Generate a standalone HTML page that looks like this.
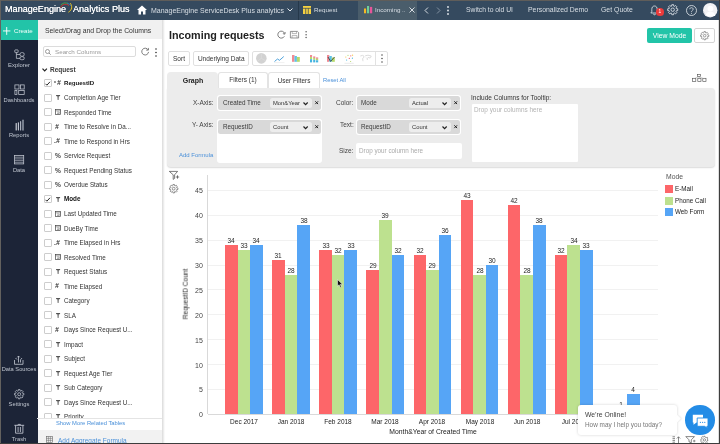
<!DOCTYPE html>
<html><head><meta charset="utf-8"><style>
html,body{margin:0;padding:0;}
body{width:720px;height:444px;overflow:hidden;position:relative;background:#fff;font-family:"Liberation Sans",sans-serif;}
.r{position:absolute;}
.t{position:absolute;white-space:nowrap;line-height:1;font-family:"Liberation Sans",sans-serif;will-change:transform;}
svg.r{overflow:visible;}
#wrap{position:absolute;left:0;top:0;width:720px;height:444px;overflow:hidden;filter:blur(0.25px);}
</style></head><body><div id="wrap">
<div class="r" style="left:0.00px;top:0.00px;width:720.00px;height:20.00px;background:#354a5f"></div>
<div class="t" style="left:4.90px;top:5.03px;font-size:9.1px;color:#fff;font-weight:normal;text-shadow:0 0 0.4px #fff">ManageEngine</div>
<svg class="r" style="left:0;top:0" width="80" height="20" viewBox="0 0 80 20"><path d="M60.53 7.75 A5.4 5.4 0 0 1 69.07 5.46" stroke="#d9342b" stroke-width="0.9" fill="none"/><path d="M60.79 4.79 A6.8 6.8 0 0 1 67.93 3.21" stroke="#3cab4b" stroke-width="0.9" fill="none"/><path d="M67.31 3.22 A6.6 6.6 0 0 1 71.32 6.30" stroke="#2f80c8" stroke-width="0.9" fill="none"/><path d="M70.2 3.2 C72.6 6 72.2 10 68.4 12.2" stroke="#f0c419" stroke-width="1" fill="none"/></svg>
<div class="t" style="left:72.90px;top:5.03px;font-size:9.1px;color:#fff;font-weight:normal;text-shadow:0 0 0.4px #fff">Analytics Plus</div>
<svg class="r" style="left:136.5px;top:5px" width="10" height="10" viewBox="0 0 10 10"><path d="M5 0.5 L10 5 H8.5 V9.5 H6 V6.5 H4 V9.5 H1.5 V5 H0 Z" fill="#fff"/></svg>
<div class="t" style="left:150.80px;top:6.94px;font-size:7px;color:#d9dfe5;font-weight:normal;">ManageEngine ServiceDesk Plus analytics</div>
<svg class="r" style="left:286.5px;top:8px" width="6" height="4" viewBox="0 0 6 4"><path d="M0.5 0.5 L3 3 L5.5 0.5" stroke="#e6ebef" stroke-width="1" fill="none"/></svg>
<div class="r" style="left:297.50px;top:0.00px;width:1.00px;height:20.00px;background:#26394b"></div>
<svg class="r" style="left:303px;top:6px" width="8" height="8" viewBox="0 0 8 8"><rect x="0" y="0" width="8" height="8" fill="#f5d142"/><path d="M0 2.3 H8 M2.7 2.3 V8 M5.3 2.3 V8" stroke="#2d4157" stroke-width="0.7"/></svg>
<div class="t" style="left:313.90px;top:7.30px;font-size:6.25px;color:#d9dfe5;font-weight:normal;">Request</div>
<div class="r" style="left:357.80px;top:1.00px;width:59.20px;height:19.00px;background:#4a5d6b"></div>
<svg class="r" style="left:363.7px;top:5.7px" width="8.5" height="7.3" viewBox="0 0 8.5 7.3"><rect x="0" y="2.5" width="2.1" height="4.8" fill="#f5b823"/><rect x="3" y="0" width="2.1" height="7.3" fill="#6ccf9a"/><rect x="5.9" y="0.9" width="2.3" height="6.4" fill="#e8559a"/></svg>
<div class="t" style="left:375.00px;top:7.30px;font-size:6.25px;color:#d9dfe5;font-weight:normal;">Incoming</div>
<div class="t" style="left:401.50px;top:7.30px;font-size:6.25px;color:#d9dfe5;font-weight:normal;">..</div>
<svg class="r" style="left:409px;top:7px" width="6" height="6" viewBox="0 0 6 6"><path d="M0.5 0.5 L5.5 5.5 M5.5 0.5 L0.5 5.5" stroke="#e6ebef" stroke-width="0.9"/></svg>
<svg class="r" style="left:424px;top:7px" width="5" height="7" viewBox="0 0 5 7"><path d="M4 0.5 L1 3.5 L4 6.5" stroke="#e6ebef" stroke-width="0.9" fill="none"/></svg>
<svg class="r" style="left:436px;top:7px" width="5" height="7" viewBox="0 0 5 7"><path d="M1 0.5 L4 3.5 L1 6.5" stroke="#8a99a8" stroke-width="0.9" fill="none"/></svg>
<svg class="r" style="left:446.5px;top:6px" width="2" height="9" viewBox="0 0 2 9"><circle cx="1" cy="1" r="0.9" fill="#e6ebef"/><circle cx="1" cy="4.5" r="0.9" fill="#e6ebef"/><circle cx="1" cy="8" r="0.9" fill="#e6ebef"/></svg>
<div class="t" style="left:465.60px;top:7.06px;font-size:6.75px;color:#d9dfe5;font-weight:normal;">Switch to old UI</div>
<div class="t" style="left:527.80px;top:6.99px;font-size:6.9px;color:#d9dfe5;font-weight:normal;">Personalized Demo</div>
<div class="t" style="left:601.20px;top:6.99px;font-size:6.9px;color:#d9dfe5;font-weight:normal;">Get Quote</div>
<svg class="r" style="left:650px;top:5px" width="9" height="10" viewBox="0 0 9 10"><path d="M4.5 1 C2.5 1 1.8 2.6 1.8 4.5 V6.8 L0.8 8 H8.2 L7.2 6.8 V4.5 C7.2 2.6 6.5 1 4.5 1 Z M3.5 8.8 A1 1 0 0 0 5.5 8.8" stroke="#e6ebef" stroke-width="0.8" fill="none"/></svg>
<div class="r" style="left:656.1px;top:7.8px;width:7.8px;height:7.7px;border-radius:50%;background:#ec3a3a;color:#fff;font-size:4.8px;line-height:7.7px;text-align:center;will-change:transform">1</div>
<svg class="r" style="left:667.3px;top:4.3px" width="11.4" height="11.4" viewBox="-5.7 -5.7 11.4 11.4"><path d="M3.54 -1.09 L5.02 -0.90 L5.02 0.90 L3.54 1.09 L3.27 1.73 L4.18 2.92 L2.92 4.18 L1.73 3.27 L1.09 3.54 L0.90 5.02 L-0.90 5.02 L-1.09 3.54 L-1.73 3.27 L-2.92 4.18 L-4.18 2.92 L-3.27 1.73 L-3.54 1.09 L-5.02 0.90 L-5.02 -0.90 L-3.54 -1.09 L-3.27 -1.73 L-4.18 -2.92 L-2.92 -4.18 L-1.73 -3.27 L-1.09 -3.54 L-0.90 -5.02 L0.90 -5.02 L1.09 -3.54 L1.73 -3.27 L2.92 -4.18 L4.18 -2.92 L3.27 -1.73 Z" stroke="#dfe4ea" stroke-width="0.85" fill="none" stroke-linejoin="round"/><circle r="1.7" stroke="#dfe4ea" stroke-width="0.85" fill="none"/></svg>
<svg class="r" style="left:685.5px;top:4.5px" width="11" height="11" viewBox="0 0 11 11"><circle cx="5.5" cy="5.5" r="5" stroke="#e6ebef" stroke-width="0.8" fill="none"/><path d="M3.8 4.2 C3.8 2.2 7.2 2.2 7.2 4.2 C7.2 5.4 5.5 5.4 5.5 6.8" stroke="#e6ebef" stroke-width="0.8" fill="none"/><circle cx="5.5" cy="8.2" r="0.5" fill="#e6ebef"/></svg>
<svg class="r" style="left:703px;top:2.8px" width="14.4" height="14.4" viewBox="0 0 14.4 14.4"><circle cx="7.2" cy="7.2" r="7.2" fill="#f2f2f4"/><circle cx="7.4" cy="5.6" r="2.9" fill="#fff"/><path d="M2.6 13 C3.2 9.6 5 8.8 7.4 8.8 C9.8 8.8 11.6 9.6 12.2 13 Z" fill="#fff"/><path d="M1 9 C1.5 11 2.5 12.5 3.5 13" stroke="#d5d8e0" stroke-width="0.8" fill="none"/></svg>
<div class="r" style="left:0.00px;top:20.00px;width:37.50px;height:424.00px;background:#1c2437"></div>
<div class="r" style="left:0.00px;top:20.00px;width:37.50px;height:20.10px;background:#22c4a8"></div>
<svg class="r" style="left:2.9px;top:26.7px" width="7.4" height="7.9" viewBox="0 0 7.4 7.9"><path d="M3.7 0 V7.9 M0 3.95 H7.4" stroke="#fff" stroke-width="0.9"/></svg>
<div class="t" style="left:13.80px;top:28.22px;font-size:6.2px;color:#f4fffc;font-weight:normal;">Create</div>
<svg class="r" style="left:13.5px;top:49px" width="11" height="11" viewBox="0 0 11 11"><rect x="0.8" y="0.9" width="3.3" height="2.7" rx="0.5" stroke="#c3c8d2" stroke-width="0.75" fill="none"/><path d="M2.4 3.6 V9.4 H6 M2.4 5.5 H6" stroke="#c3c8d2" stroke-width="0.75" fill="none"/><rect x="6" y="3.6" width="4.2" height="3.6" rx="1.6" stroke="#c3c8d2" stroke-width="0.75" fill="none"/><rect x="6" y="7.7" width="4.2" height="3" rx="1.3" stroke="#c3c8d2" stroke-width="0.75" fill="none"/></svg>
<div class="t" style="left:-181.40px;width:400px;text-align:center;top:62.67px;font-size:5.9px;color:#bfc5cf;font-weight:normal;">Explorer</div>
<svg class="r" style="left:13.6px;top:83.6px" width="11" height="11" viewBox="0 0 11 11"><rect x="0.9" y="0.9" width="4.1" height="4.1" stroke="#c3c8d2" stroke-width="0.75" fill="none"/><rect x="6.4" y="0.9" width="3.8" height="4.1" stroke="#c3c8d2" stroke-width="0.75" fill="none"/><rect x="0.9" y="6.6" width="2" height="3.8" stroke="#c3c8d2" stroke-width="0.75" fill="none"/><rect x="4.7" y="6.6" width="5.5" height="3.8" stroke="#c3c8d2" stroke-width="0.75" fill="none"/></svg>
<div class="t" style="left:-181.40px;width:400px;text-align:center;top:97.64px;font-size:5.75px;color:#bfc5cf;font-weight:normal;">Dashboards</div>
<svg class="r" style="left:14.5px;top:118.8px" width="10" height="12" viewBox="0 0 10 12"><path d="M1.2 11 V4.5" stroke="#d6dae2" stroke-width="1.1" stroke-linecap="round"/><path d="M3.4 11 V3.8" stroke="#c9ced8" stroke-width="1.1" stroke-linecap="round"/><path d="M5.6 11 V2.7" stroke="#aab1bd" stroke-width="1.2" stroke-linecap="round"/><path d="M8 11 V1.2" stroke="#8d95a3" stroke-width="1.6" stroke-linecap="round"/></svg>
<div class="t" style="left:-181.10px;width:400px;text-align:center;top:132.74px;font-size:5.75px;color:#bfc5cf;font-weight:normal;">Reports</div>
<svg class="r" style="left:14px;top:155px" width="10.5" height="9.5" viewBox="0 0 10.5 9.5"><rect x="0.5" y="0.5" width="9.2" height="8.4" stroke="#c3c8d2" stroke-width="0.75" fill="none"/><path d="M0.5 2.2 H9.7 M0.5 3.9 H9.7 M0.5 5.6 H9.7 M0.5 7.3 H9.7" stroke="#c3c8d2" stroke-width="0.6"/></svg>
<div class="t" style="left:-181.00px;width:400px;text-align:center;top:167.64px;font-size:5.75px;color:#bfc5cf;font-weight:normal;">Data</div>
<svg class="r" style="left:14px;top:354.5px" width="10" height="10" viewBox="0 0 10 10"><path d="M0.5 5 V9.3 H9 V5" stroke="#c3c8d2" stroke-width="0.8" fill="none"/><path d="M4.5 7.5 V1 M3.3 2.3 L4.5 1 L5.7 2.3 M1.5 3 L3 4.5 M8 3 L6.5 4.8 V7.5" stroke="#c3c8d2" stroke-width="0.8" fill="none"/></svg>
<div class="t" style="left:-181.40px;width:400px;text-align:center;top:367.26px;font-size:5.7px;color:#bfc5cf;font-weight:normal;">Data Sources</div>
<svg class="r" style="left:13.8px;top:388.8px" width="10.4" height="10.4" viewBox="-5.2 -5.2 10.4 10.4"><path d="M3.25 -1.00 L4.63 -0.83 L4.63 0.83 L3.25 1.00 L3.00 1.59 L3.86 2.69 L2.69 3.86 L1.59 3.00 L1.00 3.25 L0.83 4.63 L-0.83 4.63 L-1.00 3.25 L-1.59 3.00 L-2.69 3.86 L-3.86 2.69 L-3.00 1.59 L-3.25 1.00 L-4.63 0.83 L-4.63 -0.83 L-3.25 -1.00 L-3.00 -1.59 L-3.86 -2.69 L-2.69 -3.86 L-1.59 -3.00 L-1.00 -3.25 L-0.83 -4.63 L0.83 -4.63 L1.00 -3.25 L1.59 -3.00 L2.69 -3.86 L3.86 -2.69 L3.00 -1.59 Z" stroke="#c3c8d2" stroke-width="0.75" fill="none" stroke-linejoin="round"/><circle r="1.5" stroke="#c3c8d2" stroke-width="0.75" fill="none"/></svg>
<div class="t" style="left:-181.40px;width:400px;text-align:center;top:402.34px;font-size:5.75px;color:#bfc5cf;font-weight:normal;">Settings</div>
<svg class="r" style="left:13.6px;top:424.3px" width="10.5" height="10" viewBox="0 0 10.5 10"><path d="M0.3 1.3 H10.2 M3.6 1.3 L4.2 0.4 H6.3 L6.9 1.3 M1.6 1.3 V9.2 H8.9 V1.3 M4.1 3 V8 M6.4 3 V8" stroke="#c3c8d2" stroke-width="0.85" fill="none"/></svg>
<div class="t" style="left:-181.40px;width:400px;text-align:center;top:437.34px;font-size:5.75px;color:#bfc5cf;font-weight:normal;">Trash</div>
<div class="r" style="left:37.50px;top:20.00px;width:124.50px;height:424.00px;background:#fff"></div>
<div class="r" style="left:37.50px;top:20.00px;width:124.50px;height:19.40px;background:#f0f0f0"></div>
<div class="t" style="left:44.60px;top:27.91px;font-size:6.85px;color:#333;font-weight:normal;">Select/Drag and Drop the Columns</div>
<div class="r" style="left:43.30px;top:45.60px;width:93.00px;height:11.90px;border:0.6px solid #dcdcdc;border-radius:2px;box-sizing:border-box;background:#fff"></div>
<svg class="r" style="left:45px;top:48.5px" width="6" height="6" viewBox="0 0 6 6"><circle cx="2.5" cy="2.5" r="2" stroke="#777" stroke-width="0.7" fill="none"/><path d="M4 4 L5.7 5.7" stroke="#777" stroke-width="0.8"/></svg>
<div class="t" style="left:54.70px;top:48.90px;font-size:6.25px;color:#9a9a9a;font-weight:normal;">Search Columns</div>
<svg class="r" style="left:140.8px;top:47.3px" width="8.5" height="8.5" viewBox="0 0 9 9"><path d="M7.5 3 A3.6 3.6 0 1 0 8 5.2" stroke="#555" stroke-width="0.8" fill="none"/><path d="M7.8 1 V3.3 H5.5" stroke="#555" stroke-width="0.8" fill="none"/></svg>
<svg class="r" style="left:154.5px;top:47.5px" width="2" height="9" viewBox="0 0 2 9"><circle cx="1" cy="1" r="0.8" fill="#333"/><circle cx="1" cy="4.5" r="0.8" fill="#333"/><circle cx="1" cy="8" r="0.8" fill="#333"/></svg>
<svg class="r" style="left:41.9px;top:68px" width="5.4" height="3.6" viewBox="0 0 5.4 3.6"><path d="M0.5 0.6 L2.7 2.9 L4.9 0.6" stroke="#222" stroke-width="1.2" fill="none"/></svg>
<div class="t" style="left:49.90px;top:67.18px;font-size:6.5px;color:#3a3a3a;font-weight:bold;">Request</div>
<div class="r" style="left:37px;top:74px;width:125px;height:344px;overflow:hidden">
<div class="r" style="left:7px;top:5.40px;width:7.6px;height:8px;border:0.7px solid #cdcdcd;box-sizing:border-box;background:#fff;border-radius:1px"></div>
<svg class="r" style="left:8.3px;top:6.60px" width="5.5" height="5" viewBox="0 0 5.5 5"><path d="M0.5 2.8 L1.9 4.2 L5 0.8" stroke="#111" stroke-width="0.9" fill="none"/></svg>
<div class="t" style="left:17.2px;top:6.60px;font-size:5px;color:#333;font-weight:bold">*</div>
<div class="t" style="left:19.6px;top:6.44px;font-size:6.8px;color:#333;font-weight:bold;font-style:italic">#</div>
<div class="t" style="left:26.7px;top:6.37px;font-size:6.1px;color:#111;font-weight:bold">RequestID</div>
<div class="r" style="left:7px;top:19.90px;width:7.6px;height:8px;border:0.7px solid #cdcdcd;box-sizing:border-box;background:#fff;border-radius:1px"></div>
<svg class="r" style="left:19px;top:21.00px" width="4.2" height="5" viewBox="0 0 4.2 5"><path d="M0.1 0 H4.1 V0.9 L3.4 1.3 H0.8 L0.1 0.9 Z" fill="#555"/><path d="M1.45 0.8 H2.75 L2.5 4.9 H1.7 Z" fill="#555"/></svg>
<div class="t" style="left:26.7px;top:21.38px;font-size:6.3px;color:#333;font-weight:normal">Completion Age Tier</div>
<div class="r" style="left:7px;top:34.40px;width:7.6px;height:8px;border:0.7px solid #cdcdcd;box-sizing:border-box;background:#fff;border-radius:1px"></div>
<svg class="r" style="left:18px;top:35.30px" width="6" height="6" viewBox="0 0 6 6"><rect x="0.4" y="0.4" width="5.2" height="5.2" stroke="#444" stroke-width="0.7" fill="none"/><path d="M0.4 1.8 H5.6 M2 3 H4.2 V4.6 H2" stroke="#555" stroke-width="0.5" fill="none"/></svg>
<div class="t" style="left:26.7px;top:35.88px;font-size:6.3px;color:#333;font-weight:normal">Responded Time</div>
<div class="r" style="left:7px;top:48.90px;width:7.6px;height:8px;border:0.7px solid #cdcdcd;box-sizing:border-box;background:#fff;border-radius:1px"></div>
<div class="t" style="left:17.8px;top:49.94px;font-size:6.8px;color:#333;font-weight:bold;font-style:italic">#</div>
<div class="t" style="left:26.7px;top:50.38px;font-size:6.3px;color:#333;font-weight:normal">Time to Resolve in Da...</div>
<div class="r" style="left:7px;top:63.40px;width:7.6px;height:8px;border:0.7px solid #cdcdcd;box-sizing:border-box;background:#fff;border-radius:1px"></div>
<div class="t" style="left:17.2px;top:64.44px;font-size:6.8px;color:#333;font-weight:bold">.</div>
<div class="t" style="left:19.4px;top:64.44px;font-size:6.8px;color:#333;font-weight:bold;font-style:italic">#</div>
<div class="t" style="left:26.7px;top:64.88px;font-size:6.3px;color:#333;font-weight:normal">Time to Respond in Hrs</div>
<div class="r" style="left:7px;top:77.90px;width:7.6px;height:8px;border:0.7px solid #cdcdcd;box-sizing:border-box;background:#fff;border-radius:1px"></div>
<div class="t" style="left:17.6px;top:79.13px;font-size:6.6px;color:#444;font-weight:bold;letter-spacing:-0.2px">%</div>
<div class="t" style="left:26.7px;top:79.38px;font-size:6.3px;color:#333;font-weight:normal">Service Request</div>
<div class="r" style="left:7px;top:92.40px;width:7.6px;height:8px;border:0.7px solid #cdcdcd;box-sizing:border-box;background:#fff;border-radius:1px"></div>
<div class="t" style="left:17.6px;top:93.63px;font-size:6.6px;color:#444;font-weight:bold;letter-spacing:-0.2px">%</div>
<div class="t" style="left:26.7px;top:93.88px;font-size:6.3px;color:#333;font-weight:normal">Request Pending Status</div>
<div class="r" style="left:7px;top:106.90px;width:7.6px;height:8px;border:0.7px solid #cdcdcd;box-sizing:border-box;background:#fff;border-radius:1px"></div>
<div class="t" style="left:17.6px;top:108.13px;font-size:6.6px;color:#444;font-weight:bold;letter-spacing:-0.2px">%</div>
<div class="t" style="left:26.7px;top:108.38px;font-size:6.3px;color:#333;font-weight:normal">Overdue Status</div>
<div class="r" style="left:7px;top:121.40px;width:7.6px;height:8px;border:0.7px solid #cdcdcd;box-sizing:border-box;background:#fff;border-radius:1px"></div>
<svg class="r" style="left:8.3px;top:122.60px" width="5.5" height="5" viewBox="0 0 5.5 5"><path d="M0.5 2.8 L1.9 4.2 L5 0.8" stroke="#111" stroke-width="0.9" fill="none"/></svg>
<svg class="r" style="left:19px;top:122.50px" width="4.2" height="5" viewBox="0 0 4.2 5"><path d="M0.1 0 H4.1 V0.9 L3.4 1.3 H0.8 L0.1 0.9 Z" fill="#555"/><path d="M1.45 0.8 H2.75 L2.5 4.9 H1.7 Z" fill="#555"/></svg>
<div class="t" style="left:26.7px;top:122.28px;font-size:6.3px;color:#111;font-weight:bold">Mode</div>
<div class="r" style="left:7px;top:135.90px;width:7.6px;height:8px;border:0.7px solid #cdcdcd;box-sizing:border-box;background:#fff;border-radius:1px"></div>
<svg class="r" style="left:18px;top:136.80px" width="6" height="6" viewBox="0 0 6 6"><rect x="0.4" y="0.4" width="5.2" height="5.2" stroke="#444" stroke-width="0.7" fill="none"/><path d="M0.4 1.8 H5.6 M2 3 H4.2 V4.6 H2" stroke="#555" stroke-width="0.5" fill="none"/></svg>
<div class="t" style="left:26.7px;top:137.38px;font-size:6.3px;color:#333;font-weight:normal">Last Updated Time</div>
<div class="r" style="left:7px;top:150.40px;width:7.6px;height:8px;border:0.7px solid #cdcdcd;box-sizing:border-box;background:#fff;border-radius:1px"></div>
<svg class="r" style="left:18px;top:151.30px" width="6" height="6" viewBox="0 0 6 6"><rect x="0.4" y="0.4" width="5.2" height="5.2" stroke="#444" stroke-width="0.7" fill="none"/><path d="M0.4 1.8 H5.6 M2 3 H4.2 V4.6 H2" stroke="#555" stroke-width="0.5" fill="none"/></svg>
<div class="t" style="left:26.7px;top:151.88px;font-size:6.3px;color:#333;font-weight:normal">DueBy Time</div>
<div class="r" style="left:7px;top:164.90px;width:7.6px;height:8px;border:0.7px solid #cdcdcd;box-sizing:border-box;background:#fff;border-radius:1px"></div>
<div class="t" style="left:17.2px;top:165.94px;font-size:6.8px;color:#333;font-weight:bold">.</div>
<div class="t" style="left:19.4px;top:165.94px;font-size:6.8px;color:#333;font-weight:bold;font-style:italic">#</div>
<div class="t" style="left:26.7px;top:166.38px;font-size:6.3px;color:#333;font-weight:normal">Time Elapsed in Hrs</div>
<div class="r" style="left:7px;top:179.40px;width:7.6px;height:8px;border:0.7px solid #cdcdcd;box-sizing:border-box;background:#fff;border-radius:1px"></div>
<svg class="r" style="left:18px;top:180.30px" width="6" height="6" viewBox="0 0 6 6"><rect x="0.4" y="0.4" width="5.2" height="5.2" stroke="#444" stroke-width="0.7" fill="none"/><path d="M0.4 1.8 H5.6 M2 3 H4.2 V4.6 H2" stroke="#555" stroke-width="0.5" fill="none"/></svg>
<div class="t" style="left:26.7px;top:180.88px;font-size:6.3px;color:#333;font-weight:normal">Resolved Time</div>
<div class="r" style="left:7px;top:193.90px;width:7.6px;height:8px;border:0.7px solid #cdcdcd;box-sizing:border-box;background:#fff;border-radius:1px"></div>
<svg class="r" style="left:19px;top:195.00px" width="4.2" height="5" viewBox="0 0 4.2 5"><path d="M0.1 0 H4.1 V0.9 L3.4 1.3 H0.8 L0.1 0.9 Z" fill="#555"/><path d="M1.45 0.8 H2.75 L2.5 4.9 H1.7 Z" fill="#555"/></svg>
<div class="t" style="left:26.7px;top:195.38px;font-size:6.3px;color:#333;font-weight:normal">Request Status</div>
<div class="r" style="left:7px;top:208.40px;width:7.6px;height:8px;border:0.7px solid #cdcdcd;box-sizing:border-box;background:#fff;border-radius:1px"></div>
<div class="t" style="left:17.8px;top:209.44px;font-size:6.8px;color:#333;font-weight:bold;font-style:italic">#</div>
<div class="t" style="left:26.7px;top:209.88px;font-size:6.3px;color:#333;font-weight:normal">Time Elapsed</div>
<div class="r" style="left:7px;top:222.90px;width:7.6px;height:8px;border:0.7px solid #cdcdcd;box-sizing:border-box;background:#fff;border-radius:1px"></div>
<svg class="r" style="left:19px;top:224.00px" width="4.2" height="5" viewBox="0 0 4.2 5"><path d="M0.1 0 H4.1 V0.9 L3.4 1.3 H0.8 L0.1 0.9 Z" fill="#555"/><path d="M1.45 0.8 H2.75 L2.5 4.9 H1.7 Z" fill="#555"/></svg>
<div class="t" style="left:26.7px;top:224.38px;font-size:6.3px;color:#333;font-weight:normal">Category</div>
<div class="r" style="left:7px;top:237.40px;width:7.6px;height:8px;border:0.7px solid #cdcdcd;box-sizing:border-box;background:#fff;border-radius:1px"></div>
<svg class="r" style="left:19px;top:238.50px" width="4.2" height="5" viewBox="0 0 4.2 5"><path d="M0.1 0 H4.1 V0.9 L3.4 1.3 H0.8 L0.1 0.9 Z" fill="#555"/><path d="M1.45 0.8 H2.75 L2.5 4.9 H1.7 Z" fill="#555"/></svg>
<div class="t" style="left:26.7px;top:238.88px;font-size:6.3px;color:#333;font-weight:normal">SLA</div>
<div class="r" style="left:7px;top:251.90px;width:7.6px;height:8px;border:0.7px solid #cdcdcd;box-sizing:border-box;background:#fff;border-radius:1px"></div>
<div class="t" style="left:17.8px;top:252.94px;font-size:6.8px;color:#333;font-weight:bold;font-style:italic">#</div>
<div class="t" style="left:26.7px;top:253.38px;font-size:6.3px;color:#333;font-weight:normal">Days Since Request U...</div>
<div class="r" style="left:7px;top:266.40px;width:7.6px;height:8px;border:0.7px solid #cdcdcd;box-sizing:border-box;background:#fff;border-radius:1px"></div>
<svg class="r" style="left:19px;top:267.50px" width="4.2" height="5" viewBox="0 0 4.2 5"><path d="M0.1 0 H4.1 V0.9 L3.4 1.3 H0.8 L0.1 0.9 Z" fill="#555"/><path d="M1.45 0.8 H2.75 L2.5 4.9 H1.7 Z" fill="#555"/></svg>
<div class="t" style="left:26.7px;top:267.88px;font-size:6.3px;color:#333;font-weight:normal">Impact</div>
<div class="r" style="left:7px;top:280.90px;width:7.6px;height:8px;border:0.7px solid #cdcdcd;box-sizing:border-box;background:#fff;border-radius:1px"></div>
<svg class="r" style="left:19px;top:282.00px" width="4.2" height="5" viewBox="0 0 4.2 5"><path d="M0.1 0 H4.1 V0.9 L3.4 1.3 H0.8 L0.1 0.9 Z" fill="#555"/><path d="M1.45 0.8 H2.75 L2.5 4.9 H1.7 Z" fill="#555"/></svg>
<div class="t" style="left:26.7px;top:282.38px;font-size:6.3px;color:#333;font-weight:normal">Subject</div>
<div class="r" style="left:7px;top:295.40px;width:7.6px;height:8px;border:0.7px solid #cdcdcd;box-sizing:border-box;background:#fff;border-radius:1px"></div>
<svg class="r" style="left:19px;top:296.50px" width="4.2" height="5" viewBox="0 0 4.2 5"><path d="M0.1 0 H4.1 V0.9 L3.4 1.3 H0.8 L0.1 0.9 Z" fill="#555"/><path d="M1.45 0.8 H2.75 L2.5 4.9 H1.7 Z" fill="#555"/></svg>
<div class="t" style="left:26.7px;top:296.88px;font-size:6.3px;color:#333;font-weight:normal">Request Age Tier</div>
<div class="r" style="left:7px;top:309.90px;width:7.6px;height:8px;border:0.7px solid #cdcdcd;box-sizing:border-box;background:#fff;border-radius:1px"></div>
<svg class="r" style="left:19px;top:311.00px" width="4.2" height="5" viewBox="0 0 4.2 5"><path d="M0.1 0 H4.1 V0.9 L3.4 1.3 H0.8 L0.1 0.9 Z" fill="#555"/><path d="M1.45 0.8 H2.75 L2.5 4.9 H1.7 Z" fill="#555"/></svg>
<div class="t" style="left:26.7px;top:311.38px;font-size:6.3px;color:#333;font-weight:normal">Sub Category</div>
<div class="r" style="left:7px;top:324.40px;width:7.6px;height:8px;border:0.7px solid #cdcdcd;box-sizing:border-box;background:#fff;border-radius:1px"></div>
<svg class="r" style="left:19px;top:325.50px" width="4.2" height="5" viewBox="0 0 4.2 5"><path d="M0.1 0 H4.1 V0.9 L3.4 1.3 H0.8 L0.1 0.9 Z" fill="#555"/><path d="M1.45 0.8 H2.75 L2.5 4.9 H1.7 Z" fill="#555"/></svg>
<div class="t" style="left:26.7px;top:325.88px;font-size:6.3px;color:#333;font-weight:normal">Days Since Request U...</div>
<div class="r" style="left:7px;top:338.90px;width:7.6px;height:8px;border:0.7px solid #cdcdcd;box-sizing:border-box;background:#fff;border-radius:1px"></div>
<svg class="r" style="left:19px;top:340.00px" width="4.2" height="5" viewBox="0 0 4.2 5"><path d="M0.1 0 H4.1 V0.9 L3.4 1.3 H0.8 L0.1 0.9 Z" fill="#555"/><path d="M1.45 0.8 H2.75 L2.5 4.9 H1.7 Z" fill="#555"/></svg>
<div class="t" style="left:26.7px;top:340.38px;font-size:6.3px;color:#333;font-weight:normal">Priority</div>
</div>
<div class="r" style="left:37.00px;top:418.00px;width:125.00px;height:0.70px;background:#e4e4e4"></div>
<div class="t" style="left:56.00px;top:421.22px;font-size:5.8px;color:#4a90d9;font-weight:normal;">Show More Related Tables</div>
<div class="r" style="left:37.50px;top:429.90px;width:124.50px;height:14.10px;background:#f2f2f2"></div>
<svg class="r" style="left:46px;top:436px" width="8" height="8" viewBox="0 0 8 8"><rect x="0.4" y="0.4" width="6" height="6" stroke="#666" stroke-width="0.6" fill="none"/><path d="M0.4 2.4 H6.4 M0.4 4.4 H6.4 M2.4 0.4 V6.4 M4.4 0.4 V6.4" stroke="#666" stroke-width="0.5"/></svg>
<div class="t" style="left:58.30px;top:437.68px;font-size:6.5px;color:#4a90d9;font-weight:normal;">Add Aggregate Formula</div>
<div class="r" style="left:162px;top:20px;width:3px;height:424px;background:linear-gradient(to right,#d9d9d9,#fff)"></div>
<div class="t" style="left:168.60px;top:30.14px;font-size:10.75px;color:#222;font-weight:bold;">Incoming requests</div>
<svg class="r" style="left:276.8px;top:30.6px" width="8.6" height="7.6" viewBox="0 0 8.6 7.6"><path d="M7.6 2.4 A3.5 3.5 0 1 0 7.4 5.3" stroke="#555" stroke-width="0.75" fill="none"/><path d="M8.3 1.2 L7.8 3.2 L5.9 2.6" stroke="#555" stroke-width="0.75" fill="none"/></svg>
<svg class="r" style="left:290px;top:30.8px" width="9" height="7.4" viewBox="0 0 9 7.4"><path d="M0.4 0.4 V7 H8.6 V1.5 L7.5 0.4 M0.4 0.4 H7.5" stroke="#666" stroke-width="0.7" fill="none"/><path d="M2.2 0.4 V2.6 H6.6 V0.4 M2 7 V4.6 H7 V7" stroke="#888" stroke-width="0.6" fill="none"/></svg>
<svg class="r" style="left:305px;top:30.6px" width="2.2" height="7.4" viewBox="0 0 2.2 7.4"><circle cx="1.1" cy="0.8" r="0.75" fill="#555"/><circle cx="1.1" cy="3.7" r="0.75" fill="#555"/><circle cx="1.1" cy="6.6" r="0.75" fill="#555"/></svg>
<div class="r" style="left:646.5px;top:28px;width:45px;height:15px;background:#22c4a8;border-radius:2px;color:#fff;font-size:6.8px;line-height:15.6px;text-align:center;will-change:transform">View Mode</div>
<div class="r" style="left:694.00px;top:28.00px;width:21.00px;height:15.00px;border:0.7px solid #d4d4d4;border-radius:2px;box-sizing:border-box;background:#fff"></div>
<svg class="r" style="left:699.8px;top:30.8px" width="9.4" height="9.4" viewBox="-4.7 -4.7 9.4 9.4"><path d="M2.87 -0.88 L4.13 -0.74 L4.13 0.74 L2.87 0.88 L2.65 1.40 L3.45 2.40 L2.40 3.45 L1.40 2.65 L0.88 2.87 L0.74 4.13 L-0.74 4.13 L-0.88 2.87 L-1.40 2.65 L-2.40 3.45 L-3.45 2.40 L-2.65 1.40 L-2.87 0.88 L-4.13 0.74 L-4.13 -0.74 L-2.87 -0.88 L-2.65 -1.40 L-3.45 -2.40 L-2.40 -3.45 L-1.40 -2.65 L-0.88 -2.87 L-0.74 -4.13 L0.74 -4.13 L0.88 -2.87 L1.40 -2.65 L2.40 -3.45 L3.45 -2.40 L2.65 -1.40 Z" stroke="#777" stroke-width="0.7" fill="none" stroke-linejoin="round"/><circle r="1.3" stroke="#777" stroke-width="0.7" fill="none"/></svg>
<div class="r" style="left:167.6px;top:51.25px;width:22.0px;height:14.9px;border:0.7px solid #e0e0e0;border-radius:2px;box-sizing:border-box;background:#fff;color:#333;font-size:6.5px;line-height:13.5px;text-align:center;will-change:transform">Sort</div>
<div class="r" style="left:192.6px;top:51.25px;width:56.400000000000006px;height:14.9px;border:0.7px solid #e0e0e0;border-radius:2px;box-sizing:border-box;background:#fff;color:#333;font-size:6.5px;line-height:13.5px;text-align:center;will-change:transform">Underlying Data</div>
<div class="r" style="left:252.40px;top:51.25px;width:135.90px;height:14.90px;border:0.7px solid #e0e0e0;border-radius:2px;box-sizing:border-box;background:#fff"></div>
<div class="r" style="left:375.20px;top:51.50px;width:0.70px;height:14.50px;background:#e2e2e2"></div>
<svg class="r" style="left:255.8px;top:52.9px" width="10.7" height="10.7" viewBox="0 0 10.7 10.7"><circle cx="5.35" cy="5.35" r="5.3" fill="#d2d2d2"/><path d="M5.35 5.35 V0.3 M5.35 5.35 L9.6 7.8 M5.35 5.35 L1.5 8.3" stroke="#e2e2e2" stroke-width="0.5"/></svg>
<svg class="r" style="left:273.5px;top:55px" width="10.5" height="8" viewBox="0 0 10.5 8"><path d="M0.5 6.5 L3.5 4 L5.5 5.3 L9.8 1.5" stroke="#3d9ad8" stroke-width="0.9" fill="none"/><path d="M0 7.6 H10.5" stroke="#e2e2e2" stroke-width="0.5"/></svg>
<svg class="r" style="left:292.3px;top:55px" width="8" height="7" viewBox="0 0 8 7"><rect x="0" y="0" width="2.5" height="6.8" fill="#f08a93"/><rect x="2.5" y="1" width="2.4" height="5.8" fill="#5bc3e6"/><rect x="4.9" y="2" width="2.9" height="4.8" fill="#b5d96b"/></svg>
<svg class="r" style="left:309.8px;top:54.6px" width="8.4" height="7.4" viewBox="0 0 8.4 7.4"><rect x="0" y="0" width="2.1" height="2" fill="#f08a93"/><rect x="0" y="2" width="2.1" height="2.2" fill="#b5d96b"/><rect x="0" y="4.2" width="2.1" height="3.2" fill="#45b4e0"/><rect x="3.2" y="1.4" width="2.1" height="1.6" fill="#f08a93"/><rect x="3.2" y="3" width="2.1" height="1.8" fill="#b5d96b"/><rect x="3.2" y="4.8" width="2.1" height="2.6" fill="#45b4e0"/><rect x="6" y="2.4" width="2.2" height="1.5" fill="#f08a93"/><rect x="6" y="3.9" width="2.2" height="1.4" fill="#b5d96b"/><rect x="6" y="5.3" width="2.2" height="2.1" fill="#45b4e0"/></svg>
<svg class="r" style="left:327.4px;top:55px" width="8" height="7" viewBox="0 0 8 7"><rect x="0" y="0" width="2.3" height="6.8" fill="#f08a93"/><rect x="2.3" y="1" width="2.5" height="5.8" fill="#5bc3e6"/><rect x="4.8" y="2.5" width="3" height="4.3" fill="#b5d96b"/><path d="M1 2 L3.6 6.4 L7.6 2" stroke="#333" stroke-width="0.8" fill="none"/></svg>
<svg class="r" style="left:344.4px;top:53.5px" width="10" height="10" viewBox="0 0 10 10"><circle cx="1.8" cy="3" r="0.6" fill="#f5c542"/><circle cx="4" cy="1.3" r="0.6" fill="#b5d96b"/><circle cx="6.8" cy="1.8" r="0.6" fill="#ef5b6b"/><circle cx="2.6" cy="6" r="0.6" fill="#45b4e0"/><circle cx="5.3" cy="4.4" r="0.6" fill="#ef5b6b"/><circle cx="8.4" cy="4.2" r="0.6" fill="#45b4e0"/><circle cx="6.6" cy="7.5" r="0.6" fill="#b5d96b"/><circle cx="8.6" cy="1.2" r="0.6" fill="#f5c542"/><path d="M0.5 9.3 H9.8" stroke="#ddd" stroke-width="0.6"/></svg>
<svg class="r" style="left:360px;top:54.5px" width="11.6" height="7" viewBox="0 0 11.6 7"><path d="M0.3 1 L2.5 0.4 L4 1.2 L3.6 2.8 L2.6 3.4 L3 6.2 M5.2 0.8 L8 0.2 L11.2 1 L10.6 2.6 L9 3 L8.4 2.2 L7.6 3.4 L7.2 5 M5.8 2.6 L6.6 3.2" stroke="#d8d8d8" stroke-width="0.9" fill="none"/></svg>
<svg class="r" style="left:381px;top:54px" width="2" height="9" viewBox="0 0 2 9"><circle cx="1" cy="1" r="0.8" fill="#555"/><circle cx="1" cy="4.5" r="0.8" fill="#555"/><circle cx="1" cy="8" r="0.8" fill="#555"/></svg>
<svg class="r" style="left:692px;top:74px" width="14.4" height="8" viewBox="0 0 14.4 8"><rect x="5.4" y="0.5" width="3.2" height="2.1" stroke="#555" stroke-width="0.65" fill="none"/><rect x="0.6" y="4.3" width="3.2" height="3.2" stroke="#555" stroke-width="0.65" fill="none"/><rect x="5.8" y="4.3" width="3.2" height="3.2" stroke="#555" stroke-width="0.65" fill="none"/><rect x="10.8" y="4.3" width="3.2" height="3.2" stroke="#555" stroke-width="0.65" fill="none"/><path d="M7 2.6 L3 4.3 M7 2.6 L7.4 4.3 M7 2.6 L11 4.3" stroke="#888" stroke-width="0.4"/></svg>
<div class="r" style="left:167px;top:88px;width:547.5px;height:79px;background:#ececec;border-radius:0 4px 4px 4px;box-shadow:0 1px 1.5px rgba(0,0,0,0.15)"></div>
<div class="r" style="left:167px;top:72px;width:51.3px;height:17px;background:#ececec;border-radius:4px 4px 0 0"></div>
<div class="t" style="left:-7.40px;width:400px;text-align:center;top:77.24px;font-size:7px;color:#222;font-weight:bold;">Graph</div>
<div class="r" style="left:218.3px;top:72px;width:50px;height:16px;background:#fff;border:0.7px solid #e3e3e3;border-bottom:none;box-sizing:border-box;border-radius:3px 3px 0 0"></div>
<div class="t" style="left:43.30px;width:400px;text-align:center;top:77.48px;font-size:6.5px;color:#333;font-weight:normal;">Filters (1)</div>
<div class="r" style="left:268.3px;top:72px;width:52.2px;height:16px;background:#fff;border:0.7px solid #e3e3e3;border-bottom:none;box-sizing:border-box;border-radius:3px 3px 0 0"></div>
<div class="t" style="left:94.40px;width:400px;text-align:center;top:77.53px;font-size:6.4px;color:#333;font-weight:normal;">User Filters</div>
<div class="t" style="left:322.50px;top:77.82px;font-size:5.8px;color:#4a90d9;font-weight:normal;">Reset All</div>
<div class="t" style="right:506.70px;top:100.08px;font-size:6.5px;color:#444;font-weight:normal;">X-Axis:</div>
<div class="r" style="left:216.8px;top:95.1px;width:105.60px;height:15.50px;background:#fff;border-radius:3px"></div>
<div class="r" style="left:218.00px;top:96.30px;width:103.20px;height:13.30px;background:#d9d9d9;border-radius:2.5px"></div>
<div class="t" style="left:222.60px;top:100.03px;font-size:6.3px;color:#3a3a3a;font-weight:normal;">Created Time</div>
<div class="r" style="left:270.30px;top:98.40px;width:41.7px;height:9.20px;background:#ededed;border-radius:2.5px"></div>
<div class="t" style="left:272.80px;top:100.87px;font-size:5.8px;color:#333;font-weight:normal;">Mon&amp;Year</div>
<svg class="r" style="left:303.40px;top:101.65px" width="5.2" height="3.2" viewBox="0 0 5.2 3.2"><path d="M0.5 0.5 L2.6 2.6 L4.7 0.5" stroke="#222" stroke-width="1.2" fill="none"/></svg>
<svg class="r" style="left:314.90px;top:101.35px" width="3.4" height="3.4" viewBox="0 0 3.4 3.4"><path d="M0.3 0.3 L3.1 3.1 M3.1 0.3 L0.3 3.1" stroke="#222" stroke-width="1"/></svg>
<div class="t" style="right:506.70px;top:122.28px;font-size:6.5px;color:#444;font-weight:normal;">Y- Axis:</div>
<div class="r" style="left:216.80px;top:119.10px;width:105.60px;height:43.70px;background:#fff;border-radius:3px"></div>
<div class="r" style="left:216.8px;top:119.1px;width:105.60px;height:15.50px;background:#fff;border-radius:3px"></div>
<div class="r" style="left:218.00px;top:120.30px;width:103.20px;height:13.30px;background:#d9d9d9;border-radius:2.5px"></div>
<div class="t" style="left:222.60px;top:124.03px;font-size:6.3px;color:#3a3a3a;font-weight:normal;">RequestID</div>
<div class="r" style="left:270.30px;top:122.40px;width:41.7px;height:9.20px;background:#ededed;border-radius:2.5px"></div>
<div class="t" style="left:272.80px;top:124.87px;font-size:5.8px;color:#333;font-weight:normal;">Count</div>
<svg class="r" style="left:303.40px;top:125.65px" width="5.2" height="3.2" viewBox="0 0 5.2 3.2"><path d="M0.5 0.5 L2.6 2.6 L4.7 0.5" stroke="#222" stroke-width="1.2" fill="none"/></svg>
<svg class="r" style="left:314.90px;top:125.35px" width="3.4" height="3.4" viewBox="0 0 3.4 3.4"><path d="M0.3 0.3 L3.1 3.1 M3.1 0.3 L0.3 3.1" stroke="#222" stroke-width="1"/></svg>
<div class="t" style="left:178.90px;top:151.62px;font-size:6px;color:#4a90d9;font-weight:normal;">Add Formula</div>
<div class="t" style="right:366.70px;top:100.08px;font-size:6.5px;color:#444;font-weight:normal;">Color:</div>
<div class="r" style="left:355.5px;top:95.1px;width:105.60px;height:15.50px;background:#fff;border-radius:3px"></div>
<div class="r" style="left:356.70px;top:96.30px;width:103.20px;height:13.30px;background:#d9d9d9;border-radius:2.5px"></div>
<div class="t" style="left:361.30px;top:100.03px;font-size:6.3px;color:#3a3a3a;font-weight:normal;">Mode</div>
<div class="r" style="left:409.00px;top:98.40px;width:41.7px;height:9.20px;background:#ededed;border-radius:2.5px"></div>
<div class="t" style="left:411.50px;top:100.87px;font-size:5.8px;color:#333;font-weight:normal;">Actual</div>
<svg class="r" style="left:442.10px;top:101.65px" width="5.2" height="3.2" viewBox="0 0 5.2 3.2"><path d="M0.5 0.5 L2.6 2.6 L4.7 0.5" stroke="#222" stroke-width="1.2" fill="none"/></svg>
<svg class="r" style="left:453.60px;top:101.35px" width="3.4" height="3.4" viewBox="0 0 3.4 3.4"><path d="M0.3 0.3 L3.1 3.1 M3.1 0.3 L0.3 3.1" stroke="#222" stroke-width="1"/></svg>
<div class="t" style="right:366.70px;top:122.28px;font-size:6.5px;color:#444;font-weight:normal;">Text:</div>
<div class="r" style="left:355.5px;top:119.1px;width:105.60px;height:15.50px;background:#fff;border-radius:3px"></div>
<div class="r" style="left:356.70px;top:120.30px;width:103.20px;height:13.30px;background:#d9d9d9;border-radius:2.5px"></div>
<div class="t" style="left:361.30px;top:124.03px;font-size:6.3px;color:#3a3a3a;font-weight:normal;">RequestID</div>
<div class="r" style="left:409.00px;top:122.40px;width:41.7px;height:9.20px;background:#ededed;border-radius:2.5px"></div>
<div class="t" style="left:411.50px;top:124.87px;font-size:5.8px;color:#333;font-weight:normal;">Count</div>
<svg class="r" style="left:442.10px;top:125.65px" width="5.2" height="3.2" viewBox="0 0 5.2 3.2"><path d="M0.5 0.5 L2.6 2.6 L4.7 0.5" stroke="#222" stroke-width="1.2" fill="none"/></svg>
<svg class="r" style="left:453.60px;top:125.35px" width="3.4" height="3.4" viewBox="0 0 3.4 3.4"><path d="M0.3 0.3 L3.1 3.1 M3.1 0.3 L0.3 3.1" stroke="#222" stroke-width="1"/></svg>
<div class="t" style="right:366.70px;top:147.88px;font-size:6.5px;color:#444;font-weight:normal;">Size:</div>
<div class="r" style="left:355.50px;top:142.80px;width:106.20px;height:16.10px;background:#fff;border-radius:2px"></div>
<div class="t" style="left:358.50px;top:147.58px;font-size:6.3px;color:#aaa;font-weight:normal;">Drop your column here</div>
<div class="t" style="left:471.40px;top:95.18px;font-size:6.5px;color:#333;font-weight:normal;">Include Columns for Tooltip:</div>
<div class="r" style="left:471.90px;top:104.00px;width:106.50px;height:57.80px;background:#fff;border-radius:1px"></div>
<div class="t" style="left:473.70px;top:107.13px;font-size:6.4px;color:#b3b3b3;font-weight:normal;">Drop your columns here</div>
<svg class="r" style="left:168.9px;top:171.2px" width="11" height="9" viewBox="0 0 11 9"><path d="M0.3 0.4 H8.6 L5.6 3.8 V7.4 L4.2 8.4 V3.8 Z" stroke="#444" stroke-width="0.7" fill="none" stroke-linejoin="round"/><path d="M8.5 4.3 V7.7 M6.8 6 H10.2" stroke="#444" stroke-width="0.7"/></svg>
<svg class="r" style="left:168.8px;top:184.3px" width="9.4" height="9.4" viewBox="-4.7 -4.7 9.4 9.4"><path d="M2.96 -0.91 L4.23 -0.76 L4.23 0.76 L2.96 0.91 L2.74 1.45 L3.53 2.46 L2.46 3.53 L1.45 2.74 L0.91 2.96 L0.76 4.23 L-0.76 4.23 L-0.91 2.96 L-1.45 2.74 L-2.46 3.53 L-3.53 2.46 L-2.74 1.45 L-2.96 0.91 L-4.23 0.76 L-4.23 -0.76 L-2.96 -0.91 L-2.74 -1.45 L-3.53 -2.46 L-2.46 -3.53 L-1.45 -2.74 L-0.91 -2.96 L-0.76 -4.23 L0.76 -4.23 L0.91 -2.96 L1.45 -2.74 L2.46 -3.53 L3.53 -2.46 L2.74 -1.45 Z" stroke="#666" stroke-width="0.7" fill="none" stroke-linejoin="round"/><circle r="1.4" stroke="#666" stroke-width="0.7" fill="none"/></svg>
<div class="r" style="left:207.50px;top:413.95px;width:450.00px;height:0.70px;background:#f1f1f1"></div>
<div class="t" style="right:517.40px;top:411.34px;font-size:7px;color:#444;font-weight:normal;">0</div>
<div class="r" style="left:207.50px;top:389.05px;width:450.00px;height:0.70px;background:#f1f1f1"></div>
<div class="t" style="right:517.40px;top:386.44px;font-size:7px;color:#444;font-weight:normal;">5</div>
<div class="r" style="left:207.50px;top:364.15px;width:450.00px;height:0.70px;background:#f1f1f1"></div>
<div class="t" style="right:517.40px;top:361.54px;font-size:7px;color:#444;font-weight:normal;">10</div>
<div class="r" style="left:207.50px;top:339.25px;width:450.00px;height:0.70px;background:#f1f1f1"></div>
<div class="t" style="right:517.40px;top:336.64px;font-size:7px;color:#444;font-weight:normal;">15</div>
<div class="r" style="left:207.50px;top:314.35px;width:450.00px;height:0.70px;background:#f1f1f1"></div>
<div class="t" style="right:517.40px;top:311.74px;font-size:7px;color:#444;font-weight:normal;">20</div>
<div class="r" style="left:207.50px;top:289.45px;width:450.00px;height:0.70px;background:#f1f1f1"></div>
<div class="t" style="right:517.40px;top:286.84px;font-size:7px;color:#444;font-weight:normal;">25</div>
<div class="r" style="left:207.50px;top:264.55px;width:450.00px;height:0.70px;background:#f1f1f1"></div>
<div class="t" style="right:517.40px;top:261.94px;font-size:7px;color:#444;font-weight:normal;">30</div>
<div class="r" style="left:207.50px;top:239.65px;width:450.00px;height:0.70px;background:#f1f1f1"></div>
<div class="t" style="right:517.40px;top:237.04px;font-size:7px;color:#444;font-weight:normal;">35</div>
<div class="r" style="left:207.50px;top:214.75px;width:450.00px;height:0.70px;background:#f1f1f1"></div>
<div class="t" style="right:517.40px;top:212.14px;font-size:7px;color:#444;font-weight:normal;">40</div>
<div class="r" style="left:207.50px;top:189.85px;width:450.00px;height:0.70px;background:#f1f1f1"></div>
<div class="t" style="right:517.40px;top:187.24px;font-size:7px;color:#444;font-weight:normal;">45</div>
<div class="r" style="left:207.20px;top:174.60px;width:0.70px;height:239.70px;background:#d9d9d9"></div>
<div class="r" style="left:207.50px;top:413.90px;width:450.00px;height:0.80px;background:#d9d9d9"></div>
<div class="r" style="left:225.00px;top:244.98px;width:12.58px;height:169.32px;background:#fd6669"></div>
<div class="t" style="left:31.29px;width:400px;text-align:center;top:237.66px;font-size:6.5px;color:#1e1e1e;font-weight:normal;">34</div>
<div class="r" style="left:237.58px;top:249.96px;width:12.58px;height:164.34px;background:#bde18f"></div>
<div class="t" style="left:43.87px;width:400px;text-align:center;top:242.64px;font-size:6.5px;color:#1e1e1e;font-weight:normal;">33</div>
<div class="r" style="left:250.16px;top:244.98px;width:12.58px;height:169.32px;background:#56a5f6"></div>
<div class="t" style="left:56.45px;width:400px;text-align:center;top:237.66px;font-size:6.5px;color:#1e1e1e;font-weight:normal;">34</div>
<div class="t" style="left:43.90px;width:400px;text-align:center;top:418.63px;font-size:6.5px;color:#222;font-weight:normal;">Dec 2017</div>
<div class="r" style="left:272.13px;top:259.92px;width:12.58px;height:154.38px;background:#fd6669"></div>
<div class="t" style="left:78.42px;width:400px;text-align:center;top:252.60px;font-size:6.5px;color:#1e1e1e;font-weight:normal;">31</div>
<div class="r" style="left:284.71px;top:274.86px;width:12.58px;height:139.44px;background:#bde18f"></div>
<div class="t" style="left:91.00px;width:400px;text-align:center;top:267.54px;font-size:6.5px;color:#1e1e1e;font-weight:normal;">28</div>
<div class="r" style="left:297.29px;top:225.06px;width:12.58px;height:189.24px;background:#56a5f6"></div>
<div class="t" style="left:103.58px;width:400px;text-align:center;top:217.74px;font-size:6.5px;color:#1e1e1e;font-weight:normal;">38</div>
<div class="t" style="left:91.03px;width:400px;text-align:center;top:418.63px;font-size:6.5px;color:#222;font-weight:normal;">Jan 2018</div>
<div class="r" style="left:319.26px;top:249.96px;width:12.58px;height:164.34px;background:#fd6669"></div>
<div class="t" style="left:125.55px;width:400px;text-align:center;top:242.64px;font-size:6.5px;color:#1e1e1e;font-weight:normal;">33</div>
<div class="r" style="left:331.84px;top:254.94px;width:12.58px;height:159.36px;background:#bde18f"></div>
<div class="t" style="left:138.13px;width:400px;text-align:center;top:247.62px;font-size:6.5px;color:#1e1e1e;font-weight:normal;">32</div>
<div class="r" style="left:344.42px;top:249.96px;width:12.58px;height:164.34px;background:#56a5f6"></div>
<div class="t" style="left:150.71px;width:400px;text-align:center;top:242.64px;font-size:6.5px;color:#1e1e1e;font-weight:normal;">33</div>
<div class="t" style="left:138.16px;width:400px;text-align:center;top:418.63px;font-size:6.5px;color:#222;font-weight:normal;">Feb 2018</div>
<div class="r" style="left:366.39px;top:269.88px;width:12.58px;height:144.42px;background:#fd6669"></div>
<div class="t" style="left:172.68px;width:400px;text-align:center;top:262.56px;font-size:6.5px;color:#1e1e1e;font-weight:normal;">29</div>
<div class="r" style="left:378.97px;top:220.08px;width:12.58px;height:194.22px;background:#bde18f"></div>
<div class="t" style="left:185.26px;width:400px;text-align:center;top:212.76px;font-size:6.5px;color:#1e1e1e;font-weight:normal;">39</div>
<div class="r" style="left:391.55px;top:254.94px;width:12.58px;height:159.36px;background:#56a5f6"></div>
<div class="t" style="left:197.84px;width:400px;text-align:center;top:247.62px;font-size:6.5px;color:#1e1e1e;font-weight:normal;">32</div>
<div class="t" style="left:185.29px;width:400px;text-align:center;top:418.63px;font-size:6.5px;color:#222;font-weight:normal;">Mar 2018</div>
<div class="r" style="left:413.52px;top:254.94px;width:12.58px;height:159.36px;background:#fd6669"></div>
<div class="t" style="left:219.81px;width:400px;text-align:center;top:247.62px;font-size:6.5px;color:#1e1e1e;font-weight:normal;">32</div>
<div class="r" style="left:426.10px;top:269.88px;width:12.58px;height:144.42px;background:#bde18f"></div>
<div class="t" style="left:232.39px;width:400px;text-align:center;top:262.56px;font-size:6.5px;color:#1e1e1e;font-weight:normal;">29</div>
<div class="r" style="left:438.68px;top:235.02px;width:12.58px;height:179.28px;background:#56a5f6"></div>
<div class="t" style="left:244.97px;width:400px;text-align:center;top:227.70px;font-size:6.5px;color:#1e1e1e;font-weight:normal;">36</div>
<div class="t" style="left:232.42px;width:400px;text-align:center;top:418.63px;font-size:6.5px;color:#222;font-weight:normal;">Apr 2018</div>
<div class="r" style="left:460.65px;top:200.16px;width:12.58px;height:214.14px;background:#fd6669"></div>
<div class="t" style="left:266.94px;width:400px;text-align:center;top:192.84px;font-size:6.5px;color:#1e1e1e;font-weight:normal;">43</div>
<div class="r" style="left:473.23px;top:274.86px;width:12.58px;height:139.44px;background:#bde18f"></div>
<div class="t" style="left:279.52px;width:400px;text-align:center;top:267.54px;font-size:6.5px;color:#1e1e1e;font-weight:normal;">28</div>
<div class="r" style="left:485.81px;top:264.90px;width:12.58px;height:149.40px;background:#56a5f6"></div>
<div class="t" style="left:292.10px;width:400px;text-align:center;top:257.58px;font-size:6.5px;color:#1e1e1e;font-weight:normal;">30</div>
<div class="t" style="left:279.55px;width:400px;text-align:center;top:418.63px;font-size:6.5px;color:#222;font-weight:normal;">May 2018</div>
<div class="r" style="left:507.78px;top:205.14px;width:12.58px;height:209.16px;background:#fd6669"></div>
<div class="t" style="left:314.07px;width:400px;text-align:center;top:197.82px;font-size:6.5px;color:#1e1e1e;font-weight:normal;">42</div>
<div class="r" style="left:520.36px;top:274.86px;width:12.58px;height:139.44px;background:#bde18f"></div>
<div class="t" style="left:326.65px;width:400px;text-align:center;top:267.54px;font-size:6.5px;color:#1e1e1e;font-weight:normal;">28</div>
<div class="r" style="left:532.94px;top:225.06px;width:12.58px;height:189.24px;background:#56a5f6"></div>
<div class="t" style="left:339.23px;width:400px;text-align:center;top:217.74px;font-size:6.5px;color:#1e1e1e;font-weight:normal;">38</div>
<div class="t" style="left:326.68px;width:400px;text-align:center;top:418.63px;font-size:6.5px;color:#222;font-weight:normal;">Jun 2018</div>
<div class="r" style="left:554.91px;top:254.94px;width:12.58px;height:159.36px;background:#fd6669"></div>
<div class="t" style="left:361.20px;width:400px;text-align:center;top:247.62px;font-size:6.5px;color:#1e1e1e;font-weight:normal;">32</div>
<div class="r" style="left:567.49px;top:244.98px;width:12.58px;height:169.32px;background:#bde18f"></div>
<div class="t" style="left:373.78px;width:400px;text-align:center;top:237.66px;font-size:6.5px;color:#1e1e1e;font-weight:normal;">34</div>
<div class="r" style="left:580.07px;top:249.96px;width:12.58px;height:164.34px;background:#56a5f6"></div>
<div class="t" style="left:386.36px;width:400px;text-align:center;top:242.64px;font-size:6.5px;color:#1e1e1e;font-weight:normal;">33</div>
<div class="t" style="left:373.81px;width:400px;text-align:center;top:418.63px;font-size:6.5px;color:#222;font-weight:normal;">Jul 2018</div>
<div class="r" style="left:614.62px;top:409.32px;width:12.58px;height:4.98px;background:#bde18f"></div>
<div class="t" style="left:420.91px;width:400px;text-align:center;top:402.00px;font-size:6.5px;color:#1e1e1e;font-weight:normal;">1</div>
<div class="r" style="left:627.20px;top:394.38px;width:12.58px;height:19.92px;background:#56a5f6"></div>
<div class="t" style="left:433.49px;width:400px;text-align:center;top:387.06px;font-size:6.5px;color:#1e1e1e;font-weight:normal;">4</div>
<div class="t" style="left:420.94px;width:400px;text-align:center;top:418.63px;font-size:6.5px;color:#222;font-weight:normal;">Aug 2018</div>
<div class="t" style="left:232.50px;width:400px;text-align:center;top:428.94px;font-size:6.8px;color:#222;font-weight:normal;">Month&amp;Year of Created Time</div>
<div class="t" style="left:160.8px;top:290.95px;width:50px;text-align:center;font-size:6.6px;color:#222;transform:rotate(-90deg);transform-origin:25px 3.3px;">RequestID Count</div>
<svg class="r" style="left:337px;top:278.5px" width="6.5" height="9" viewBox="0 0 6.5 9"><path d="M0.5 0.5 V7.2 L2.1 5.8 L3.3 8.4 L4.4 7.9 L3.3 5.4 H5.6 Z" fill="#111" stroke="#fff" stroke-width="0.5"/></svg>
<svg class="r" style="left:70.5px;top:82.3px" width="5" height="5" viewBox="0 0 5 5"><path d="M0.3 0.3 V4.5 L1.4 3.5 L2.2 4.8 L3 4.4 L2.3 3.2 H3.8 Z" fill="#999" opacity="0.7"/></svg>
<div class="t" style="left:665.70px;top:173.64px;font-size:6.8px;color:#555;font-weight:normal;">Mode</div>
<div class="r" style="left:665.00px;top:185.00px;width:7.80px;height:7.80px;background:#fd6669"></div>
<div class="t" style="left:674.90px;top:185.88px;font-size:6.3px;color:#222;font-weight:normal;">E-Mail</div>
<div class="r" style="left:665.00px;top:197.00px;width:7.80px;height:7.80px;background:#bde18f"></div>
<div class="t" style="left:674.90px;top:197.88px;font-size:6.3px;color:#222;font-weight:normal;">Phone Call</div>
<div class="r" style="left:665.00px;top:208.20px;width:7.80px;height:7.80px;background:#56a5f6"></div>
<div class="t" style="left:674.90px;top:209.08px;font-size:6.3px;color:#222;font-weight:normal;">Web Form</div>
<div class="r" style="left:577.5px;top:405px;width:99.5px;height:29.5px;background:#fff;border-radius:3px;box-shadow:0 0 3px rgba(0,0,0,0.18)"></div>
<div class="r" style="left:674.5px;top:416px;width:4.5px;height:4.5px;background:#fff;transform:rotate(45deg);box-shadow:1px -1px 1.5px rgba(0,0,0,0.08)"></div>
<div class="t" style="left:584.80px;top:412.34px;font-size:6.8px;color:#3c3c3c;font-weight:normal;">We&#8217;re Online!</div>
<div class="t" style="left:584.60px;top:422.13px;font-size:6.4px;color:#777;font-weight:normal;">How may I help you today?</div>
<div class="r" style="left:685px;top:405.3px;width:29.5px;height:29.5px;border-radius:50%;background:#238ce6"></div>
<svg class="r" style="left:692px;top:413.5px" width="17" height="15" viewBox="0 0 17 15"><path d="M0.8 0.8 H11 V8.5 H4.5 L1.5 10.8 V8.5 H0.8 Z" fill="#fff"/><path d="M5.2 4 H16 V12.3 H14.8 L15.5 14.3 L12.5 12.3 H5.2 Z" fill="#fff" stroke="#238ce6" stroke-width="0.9"/><circle cx="8.4" cy="8.3" r="0.65" fill="#238ce6"/><circle cx="10.6" cy="8.3" r="0.65" fill="#238ce6"/><circle cx="12.8" cy="8.3" r="0.65" fill="#238ce6"/></svg>
<svg class="r" style="left:672px;top:435.5px" width="37" height="7" viewBox="0 0 37 7"><path d="M0.5 0.8 H3 M0.5 2.6 H3 M0.5 4.4 H3 M0.5 6.2 H3 M6.5 0.8 V7 M4.8 2.5 L6.5 0.8 L8.2 2.5" stroke="#555" stroke-width="0.7" fill="none"/><path d="M13.8 0.6 H22.5 L19.3 3.8 V6.8 L17 5.8 V3.8 Z" stroke="#555" stroke-width="0.7" fill="none"/><path d="M21 5 H23.5 M22.2 3.8 V6.3" stroke="#555" stroke-width="0.6"/><g transform="translate(32.4 3.9)"><path d="M-0.6 -3.6 H0.6 L0.9 -2.6 L1.8 -2.2 L2.7 -2.8 L3.5 -1.9 L2.9 -1 L3.3 -0.1 L3.6 0 V0.6 L2.6 0.9 L2.2 1.8 L2.8 2.7 L1.9 3.5 L1 2.9 L0.6 3.2 V3.6 H-0.6 L-0.9 2.6 L-1.8 2.2 L-2.7 2.8 L-3.5 1.9 L-2.9 1 L-3.3 0.6 H-3.6 V-0.6 L-2.6 -0.9 L-2.2 -1.8 L-2.8 -2.7 L-1.9 -3.5 L-1 -2.9 L-0.6 -3.2 Z" stroke="#555" stroke-width="0.6" fill="none"/><circle r="1.2" stroke="#555" stroke-width="0.6" fill="none"/></g></svg>
<div class="r" style="left:0.00px;top:0.00px;width:720.00px;height:1.00px;background:#5f5d5a"></div>
<div class="r" style="left:0.00px;top:0.00px;width:1.00px;height:444.00px;background:#63615e"></div>
<div class="r" style="left:718.00px;top:20.00px;width:1.00px;height:423.00px;background:#dedede"></div>
<div class="r" style="left:719.00px;top:0.00px;width:1.00px;height:444.00px;background:#3d3d3d"></div>
<div class="r" style="left:0.00px;top:442.70px;width:720.00px;height:1.30px;background:#3d3d3d"></div>
</div></body></html>
